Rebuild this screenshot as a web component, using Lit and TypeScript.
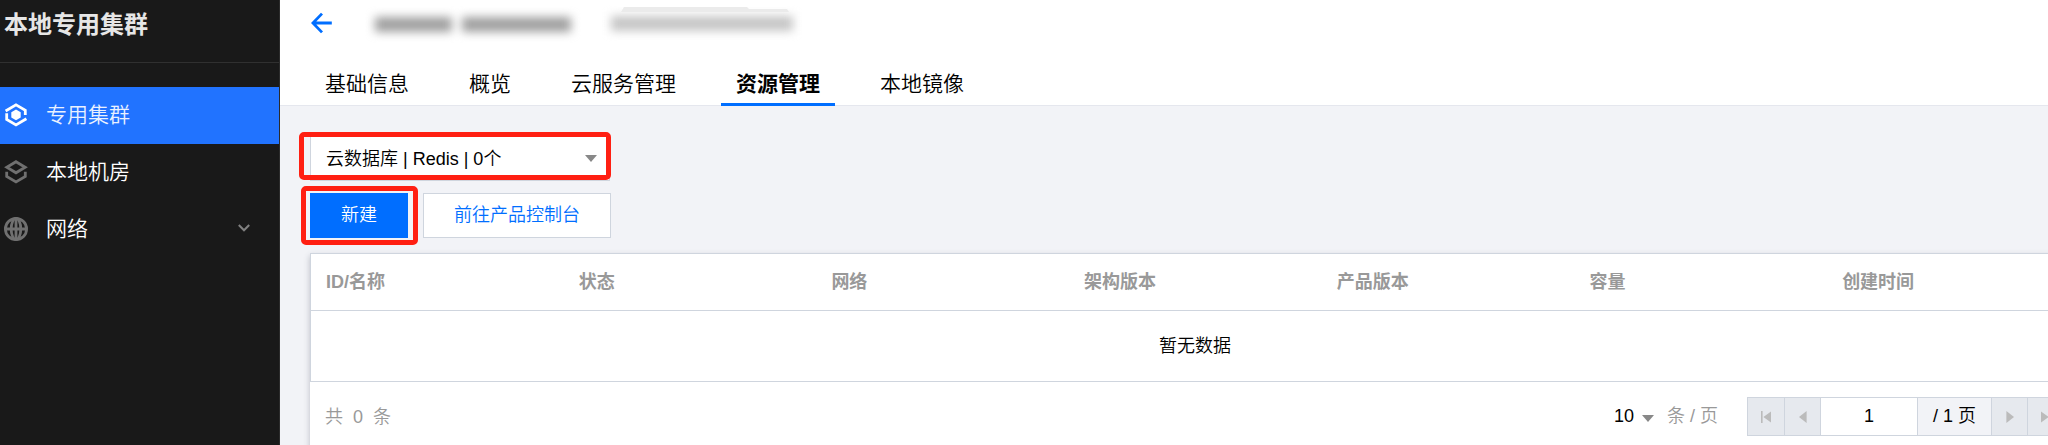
import { LitElement, html, css, svg } from "lit";
import { customElement } from "lit/decorators.js";
import { classMap } from "lit/directives/class-map.js";

const icons: Record<string, unknown> = {
  cluster: svg`
    <path d="M1.6 8 12 1.9l9.3 5.4v4.6" />
    <path d="M2.7 10.2v6.3l9.3 5.4 10.4-6.1" />
    <path class="solid" d="M12 6.5l4.7 2.7v5.4L12 17.3l-4.7-2.7V9.200z" />`,
  room: svg`
    <path d="M12 1.7 21.2 7.3 12 12.800 2.800 7.300z" />
    <path d="M2.700 11.800v4.700L12 21.900l9.300-5.400v-4.700" />`,
  globe: svg`
    <circle cx="12" cy="12" r="10.6" />
    <ellipse cx="12" cy="12" rx="4.8" ry="10.6" />
    <path d="M1.4 12h21.2M12 1.4v21.2" />`,
};

@customElement("side-nav")
class SideNav extends LitElement {
  static styles = css`
    :host { display: block; width: 280px; height: 445px; background: #191919; flex: none; box-sizing: border-box; border-right: 1px solid #2b2b2b; }
    .title { height: 63px; box-sizing: border-box; padding: 8px 0 0 4px; border-bottom: 1px solid #303030; font-size: 24px; line-height: 34px; font-weight: 700; color: #e6e6e6; margin-bottom: 24px; }
    .item { display: flex; align-items: center; height: 57px; padding: 0 29px 0 4px; color: #fff; font-size: 21px; line-height: 30px; }
    .item.active { background: #2173ff; color: #e9f1ff; }
    .icon { width: 24px; height: 24px; margin: 0 18px 1px 0; flex: none; fill: none; stroke: #707070; stroke-width: 2.8; }
    .active .icon { stroke: #fff; }
    .active .solid { fill: #fff; stroke: none; }
    .label { flex: 1; margin-bottom: 1px; }
    .chev { width: 12px; height: 8px; fill: none; stroke: #808080; stroke-width: 2; margin-top: -3px; }
  `;
  items = [
    { id: "cluster", label: "专用集群", active: true },
    { id: "room", label: "本地机房" },
    { id: "globe", label: "网络", more: true },
  ];
  render() {
    return html`
      <div class="title">本地专用集群</div>
      ${this.items.map((i) => html`
        <div class=${classMap({ item: true, active: !!i.active })}>
          <svg class="icon" viewBox="0 0 24 24">${icons[i.id]}</svg>
          <span class="label">${i.label}</span>
          ${i.more ? html`<svg class="chev" viewBox="0 0 12 8"><path d="M.8 1 6 6.3 11.2 1" /></svg>` : ""}
        </div>`)}
    `;
  }
}

@customElement("page-header")
class PageHeader extends LitElement {
  static styles = css`
    :host { display: block; height: 106px; box-sizing: border-box; background: #fff; border-bottom: 1px solid #e5e7ee; }
    .top { display: flex; height: 62px; padding-left: 31px; }
    .back { width: 21px; height: 22px; margin-top: 12px; fill: none; stroke: #006eff; stroke-width: 2.8; flex: none; }
    .name, .desc { filter: blur(5px); height: 15px; display: flex; gap: 10px; }
    .name { margin: 17px 0 0 43px; width: 196px; }
    .name i { background: #a0a0a0; }
    .name i:first-child { width: 78px; }
    .name i:last-child { width: 110px; }
    .desc { margin: 16px 0 0 40px; width: 182px; background: #c6c6c6; }
    .cap { position: absolute; left: 621px; top: 7px; width: 168px; height: 5px; background: #ebebeb; clip-path: polygon(3px 0, 126px 0, 128px 2px, 166px 2px, 168px 5px, 0 5px); }
    .tabs { display: flex; gap: 30px; padding-left: 30px; height: 44px; }
    .tab { height: 44px; box-sizing: border-box; padding: 6px 15px 0; font-size: 21px; line-height: 32px; color: #000; border-bottom: 3px solid transparent; white-space: nowrap; }
    .tab.on { font-weight: 700; border-color: #006eff; }
  `;
  render() {
    return html`
      <div class="top">
        <svg class="back" viewBox="0 0 21 22"><path d="M11 1.6 1.9 11l9.1 9.4M2 11h18.8" /></svg>
        <div class="name"><i></i><i></i></div>
        <div class="desc"></div>
        <div class="cap"></div>
      </div>
      <div class="tabs">
        ${["基础信息", "概览", "云服务管理", "资源管理", "本地镜像"].map((t, n) => html`
          <div class=${classMap({ tab: true, on: n === 3 })}>${t}</div>`)}
      </div>`;
  }
}

@customElement("resource-table")
class ResourceTable extends LitElement {
  static styles = css`
    :host { display: block; width: 1770px; height: 210px; background: #fff; box-shadow: 0 3px 6px rgba(54, 58, 80, 0.3); font-size: 18px; }
    .grid { border: 1px solid #cfd5de; box-sizing: border-box; height: 129px; }
    .head { display: grid; grid-template-columns: repeat(7, 252.7px); height: 56px; line-height: 56px; color: #999; font-weight: 700; border-bottom: 1px solid #cfd5de; }
    .head span { padding-left: 15px; }
    .empty { height: 70px; line-height: 71px; text-align: center; color: #000; }
    .foot { display: flex; height: 70px; padding: 15px 0 0 15px; box-sizing: border-box; line-height: 38px; color: #999; }
    .total { word-spacing: 5px; width: 1289px; flex: none; line-height: 40px; }
    .size { color: #000; width: 28px; flex: none; }
    .tri { width: 12px; height: 7px; background: #888; clip-path: polygon(0 0, 100% 0, 50% 100%); margin: 18px 13px 0 0; flex: none; }
    .unit { width: 80px; flex: none; color: #999; }
    .pager { display: flex; height: 39px; box-sizing: border-box; border: 1px solid #cfd5de; color: #000; line-height: 37px; }
    .cell { width: 36px; box-sizing: border-box; border-right: 1px solid #cfd5de; background: #e6e9ee; display: flex; align-items: center; justify-content: center; }
    .cell svg { width: 12px; height: 12px; fill: #bbb; }
    .first { width: 37px; }
    .input { width: 97px; box-sizing: border-box; border-right: 1px solid #cfd5de; text-align: center; }
    .pages { width: 74px; box-sizing: border-box; border-right: 1px solid #cfd5de; background: #f2f3f7; text-align: center; }
  `;
  render() {
    return html`
      <div class="grid">
        <div class="head">
          ${["ID/名称", "状态", "网络", "架构版本", "产品版本", "容量", "创建时间"].map((c) => html`<span>${c}</span>`)}
        </div>
        <div class="empty">暂无数据</div>
      </div>
      <div class="foot">
        <span class="total">共 0 条</span>
        <span class="size">10</span><i class="tri"></i>
        <span class="unit">条 / 页</span>
        <div class="pager">
          <div class="cell first"><svg viewBox="0 0 12 12"><path d="M1 0h1.6v12H1zM11 .5v11L3.4 6z" /></svg></div>
          <div class="cell"><svg viewBox="0 0 12 12"><path d="M9.6 0v12L2 6z" /></svg></div>
          <div class="input">1</div>
          <div class="pages">/ 1 页</div>
          <div class="cell"><svg viewBox="0 0 12 12"><path d="M2.4 0v12L10 6z" /></svg></div>
          <div class="cell"><svg viewBox="0 0 12 12"><path d="M1 .5v11L8.6 6zM9.4 0H11v12H9.4z" /></svg></div>
        </div>
      </div>`;
  }
}

@customElement("app-root")
class AppRoot extends LitElement {
  static styles = css`
    :host { display: flex; position: relative; width: 100%; height: 445px; overflow: hidden; font-family: "Liberation Sans", "Noto Sans CJK SC", sans-serif; font-weight: 350; background: #f2f3f7; }
    .main { flex: 1; min-width: 0; }
    .body { padding: 30px 0 0 30px; display: flex; flex-direction: column; font-size: 18px; }
    .select { display: flex; align-items: center; justify-content: space-between; width: 300px; height: 45px; box-sizing: border-box; border: 1px solid #cfd5de; background: #fff; padding: 0 12px 0 15px; color: #000; margin-bottom: 12px; }
    .select span { margin-bottom: 4px; }
    .tri { width: 12px; height: 7px; background: #888; clip-path: polygon(0 0, 100% 0, 50% 100%); }
    .actions { display: flex; gap: 15px; margin-bottom: 15px; }
    .btn { height: 45px; box-sizing: border-box; line-height: 43px; text-align: center; }
    .primary { width: 98px; background: #006eff; color: #fff; border: 1px solid #006eff; }
    .plain { width: 188px; background: #fff; color: #006eff; border: 1px solid #cfd5de; }
    .mark { position: absolute; box-sizing: border-box; border: 5px solid #ff1f12; border-radius: 5px; }
    .m1 { left: 299px; top: 132px; width: 312px; height: 48px; }
    .m2 { left: 301px; top: 186px; width: 117px; height: 59px; }
  `;
  render() {
    return html`
      <side-nav></side-nav>
      <div class="main">
        <page-header></page-header>
        <div class="body">
          <div class="select"><span>云数据库 | Redis | 0个</span><i class="tri"></i></div>
          <div class="actions">
            <div class="btn primary">新建</div>
            <div class="btn plain">前往产品控制台</div>
          </div>
          <resource-table></resource-table>
        </div>
      </div>
      <div class="mark m1"></div>
      <div class="mark m2"></div>`;
  }
}
